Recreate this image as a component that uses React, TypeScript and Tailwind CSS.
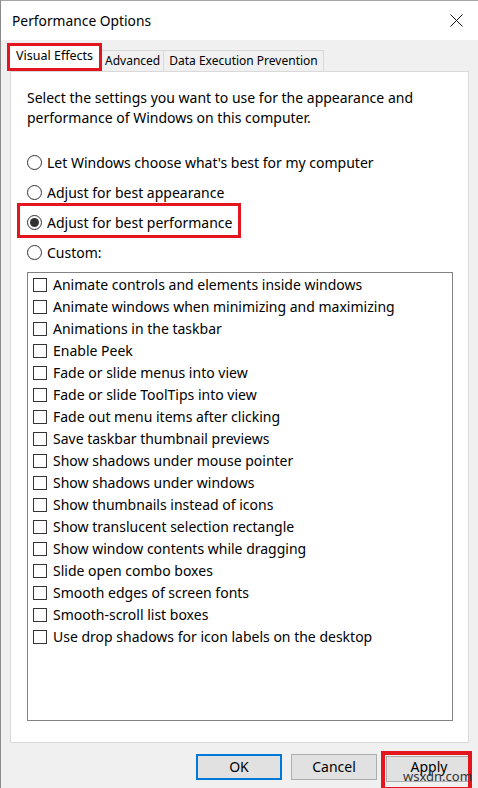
import React from "react";

const items = [
  "Animate controls and elements inside windows",
  "Animate windows when minimizing and maximizing",
  "Animations in the taskbar",
  "Enable Peek",
  "Fade or slide menus into view",
  "Fade or slide ToolTips into view",
  "Fade out menu items after clicking",
  "Save taskbar thumbnail previews",
  "Show shadows under mouse pointer",
  "Show shadows under windows",
  "Show thumbnails instead of icons",
  "Show translucent selection rectangle",
  "Show window contents while dragging",
  "Slide open combo boxes",
  "Smooth edges of screen fonts",
  "Smooth-scroll list boxes",
  "Use drop shadows for icon labels on the desktop",
];

function Radio({ checked }: { checked?: boolean }) {
  return (
    <span className="w-[15px] h-[15px] rounded-full border border-[#333333] bg-white flex items-center justify-center shrink-0">
      {checked && <span className="w-[9px] h-[9px] rounded-full bg-[#333333]" />}
    </span>
  );
}

export default function App() {
  return (
    <div
      className="w-[478px] h-[788px] bg-[#f0f0f0] border-l border-[#8a8a8a] border-t border-t-[#a5a5a5] flex flex-col overflow-hidden relative text-black"
      style={{ fontFamily: '"Noto Sans", "Open Sans", sans-serif' }}
    >
      {/* Title bar */}
      <div className="h-[39px] bg-white flex items-center justify-between pl-[11px] pr-[14px] shrink-0">
        <span className="text-[13.8px] leading-none">Performance Options</span>
        <svg width="13" height="13" viewBox="0 0 13 13" className="mr-[1px]">
          <path d="M0.5 0.5 L12.5 12.5 M12.5 0.5 L0.5 12.5" stroke="#111" strokeWidth="1" />
        </svg>
      </div>

      {/* Tabs */}
      <div className="flex items-end pl-[6px] mt-[3px] h-[28px] relative z-10">
        <div className="border-[3px] border-[#e3151f] h-[28px] flex">
          <div className="bg-white px-[6px] flex items-center text-[12.5px] leading-none h-full pb-[2px]">Visual Effects</div>
        </div>
        <div className="h-[22px] -mb-[1px] border border-[#d9d9d9] border-l-0 bg-[#f0f0f0] px-[3px] flex items-center text-[12px] leading-none">Advanced</div>
        <div className="h-[22px] -mb-[1px] border border-[#d9d9d9] border-l-0 bg-[#f0f0f0] px-[5px] flex items-center text-[12px] leading-none">Data Execution Prevention</div>
      </div>

      {/* Panel */}
      <div className="ml-[9px] w-[459px] h-[672px] bg-white border border-[#d9d9d9] pl-[16px] pt-[16px] flex flex-col">
        <p className="text-[14px] leading-[20px] w-[400px]">
          Select the settings you want to use for the appearance and performance of Windows on this computer.
        </p>
        <div className="flex flex-col mt-[19px]">
          <div className="h-[30px] flex items-center gap-[5px] text-[14px]">
            <Radio />
            <span>Let Windows choose what's best for my computer</span>
          </div>
          <div className="h-[30px] flex items-center gap-[5px] text-[14px]">
            <Radio />
            <span>Adjust for best appearance</span>
          </div>
          <div className="h-[30px] flex items-center gap-[5px] text-[14px] relative">
            <Radio checked />
            <span>Adjust for best performance</span>
            <span className="absolute left-[-10px] top-[-4px] w-[224px] h-[35px] border-[3px] border-[#e3151f]" />
          </div>
          <div className="h-[30px] flex items-center gap-[5px] text-[14px]">
            <Radio />
            <span>Custom:</span>
          </div>
        </div>
        <div className="mt-[5px] w-[426px] h-[449px] border border-[#828282] bg-white pt-[1px] pl-[5px] flex flex-col">
          {items.map((t) => (
            <div key={t} className="h-[22px] flex items-center gap-[6px] text-[14px] leading-none">
              <span className="w-[14px] h-[14px] border border-[#333333] bg-white shrink-0" />
              <span>{t}</span>
            </div>
          ))}
        </div>
      </div>

      {/* Buttons */}
      <div className="flex justify-end gap-[9px] pr-[6px] mt-[11px]">
        <button className="w-[86px] h-[26px] bg-[#e1e1e1] border-2 border-[#0078d7] text-[14px] leading-none">OK</button>
        <button className="w-[86px] h-[26px] bg-[#e1e1e1] border border-[#adadad] text-[14px] leading-none">Cancel</button>
        <div className="relative">
          <button className="w-[86px] h-[26px] bg-[#e1e1e1] border border-[#adadad] text-[14px] leading-none pb-[3px]">Apply</button>
          <span className="absolute left-[-5px] top-[-3px] w-[91px] h-[40px] border-[4px] border-[#e3151f]" />
          <span className="absolute left-[17px] top-[16px] text-[13px] text-[#333] leading-none">wsxdn.com</span>
        </div>
      </div>
    </div>
  );
}
